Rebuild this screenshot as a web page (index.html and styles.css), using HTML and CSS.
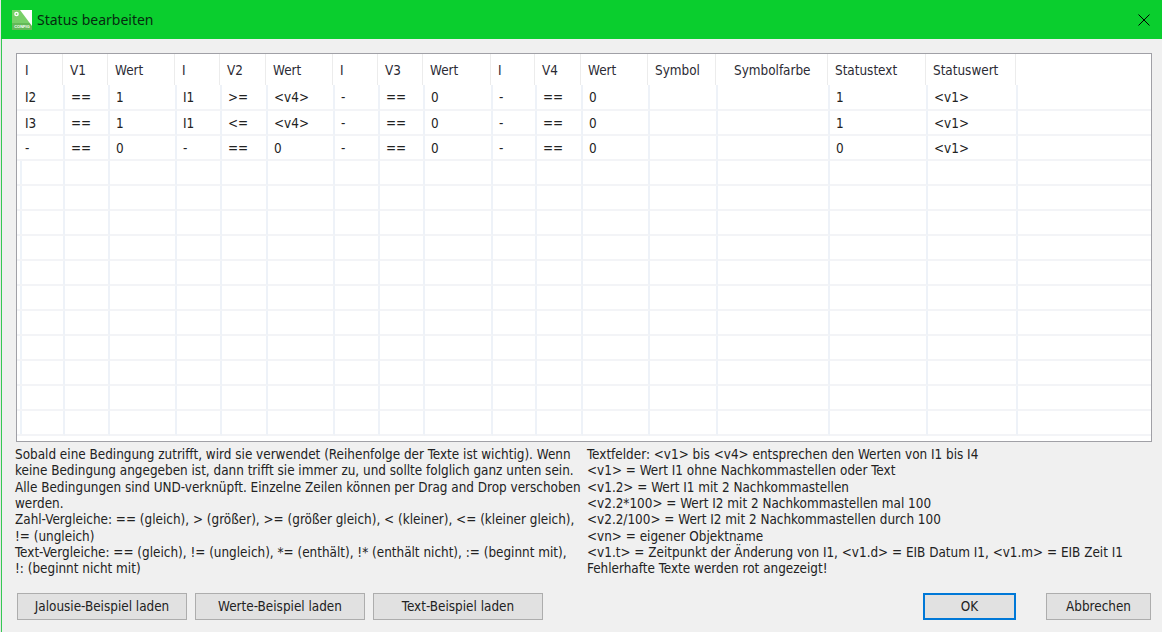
FILE: index.html
```html
<!DOCTYPE html>
<html lang="de">
<head>
<meta charset="utf-8">
<title>Status bearbeiten</title>
<link rel="stylesheet" href="styles.css">
</head>
<body>
<div class="window">
  <header class="titlebar">
    <svg class="logo" width="20" height="20" viewBox="0 0 20 20">
      <rect width="20" height="20" fill="#78cf68"/>
      <rect y="13" width="20" height="7" fill="#63b957"/>
      <path d="M8 0H20V16Z" fill="#ffffff"/>
      <circle cx="4.5" cy="4" r="1.6" fill="none" stroke="#fff" stroke-width="1.4"/>
      <text x="10" y="18.4" text-anchor="middle" class="logo-text">CONFIG</text>
    </svg>
    <span class="title">Status bearbeiten</span>
    <svg class="close" width="12" height="12" viewBox="0 0 12 12"><path d="M0.5 0.5L11.5 11.5M11.5 0.5L0.5 11.5" stroke="#000" stroke-width="1" fill="none"/></svg>
  </header>
  <main class="content">
    <div class="frame">
      <table class="grid">
        <colgroup>
          <col class="w48"><col class="w45"><col class="w67"><col class="w45"><col class="w46"><col class="w67"><col class="w45"><col class="w45"><col class="w68"><col class="w44"><col class="w46"><col class="w67"><col class="w68"><col class="w112"><col class="w98"><col class="w90"><col>
        </colgroup>
        <thead>
          <tr><th class="first">I</th><th>V1</th><th>Wert</th><th>I</th><th>V2</th><th>Wert</th><th>I</th><th>V3</th><th>Wert</th><th>I</th><th>V4</th><th>Wert</th><th>Symbol</th><th class="wide">Symbolfarbe</th><th>Statustext</th><th>Statuswert</th><th class="filler"></th></tr>
        </thead>
        <tbody>
          <tr><td class="first">I2</td><td>==</td><td>1</td><td>I1</td><td>&gt;=</td><td>&lt;v4&gt;</td><td>-</td><td>==</td><td>0</td><td>-</td><td>==</td><td>0</td><td></td><td></td><td>1</td><td>&lt;v1&gt;</td><td class="filler"></td></tr>
          <tr><td class="first">I3</td><td>==</td><td>1</td><td>I1</td><td>&lt;=</td><td>&lt;v4&gt;</td><td>-</td><td>==</td><td>0</td><td>-</td><td>==</td><td>0</td><td></td><td></td><td>1</td><td>&lt;v1&gt;</td><td class="filler"></td></tr>
          <tr><td class="first">-</td><td>==</td><td>0</td><td>-</td><td>==</td><td>0</td><td>-</td><td>==</td><td>0</td><td>-</td><td>==</td><td>0</td><td></td><td></td><td>0</td><td>&lt;v1&gt;</td><td class="filler"></td></tr>
          <tr class="empty"><td></td><td></td><td></td><td></td><td></td><td></td><td></td><td></td><td></td><td></td><td></td><td></td><td></td><td></td><td></td><td></td><td class="filler"></td></tr>
          <tr class="empty"><td></td><td></td><td></td><td></td><td></td><td></td><td></td><td></td><td></td><td></td><td></td><td></td><td></td><td></td><td></td><td></td><td class="filler"></td></tr>
          <tr class="empty"><td></td><td></td><td></td><td></td><td></td><td></td><td></td><td></td><td></td><td></td><td></td><td></td><td></td><td></td><td></td><td></td><td class="filler"></td></tr>
          <tr class="empty"><td></td><td></td><td></td><td></td><td></td><td></td><td></td><td></td><td></td><td></td><td></td><td></td><td></td><td></td><td></td><td></td><td class="filler"></td></tr>
          <tr class="empty"><td></td><td></td><td></td><td></td><td></td><td></td><td></td><td></td><td></td><td></td><td></td><td></td><td></td><td></td><td></td><td></td><td class="filler"></td></tr>
          <tr class="empty"><td></td><td></td><td></td><td></td><td></td><td></td><td></td><td></td><td></td><td></td><td></td><td></td><td></td><td></td><td></td><td></td><td class="filler"></td></tr>
          <tr class="empty"><td></td><td></td><td></td><td></td><td></td><td></td><td></td><td></td><td></td><td></td><td></td><td></td><td></td><td></td><td></td><td></td><td class="filler"></td></tr>
          <tr class="empty"><td></td><td></td><td></td><td></td><td></td><td></td><td></td><td></td><td></td><td></td><td></td><td></td><td></td><td></td><td></td><td></td><td class="filler"></td></tr>
          <tr class="empty"><td></td><td></td><td></td><td></td><td></td><td></td><td></td><td></td><td></td><td></td><td></td><td></td><td></td><td></td><td></td><td></td><td class="filler"></td></tr>
          <tr class="empty"><td></td><td></td><td></td><td></td><td></td><td></td><td></td><td></td><td></td><td></td><td></td><td></td><td></td><td></td><td></td><td></td><td class="filler"></td></tr>
          <tr class="empty"><td></td><td></td><td></td><td></td><td></td><td></td><td></td><td></td><td></td><td></td><td></td><td></td><td></td><td></td><td></td><td></td><td class="filler"></td></tr>
        </tbody>
      </table>
    </div>
    <section class="help">
      <p class="help-left">Sobald eine Bedingung zutrifft, wird sie verwendet (Reihenfolge der Texte ist wichtig). Wenn<br>keine Bedingung angegeben ist, dann trifft sie immer zu, und sollte folglich ganz unten sein.<br>Alle Bedingungen sind UND-verknüpft. Einzelne Zeilen können per Drag and Drop verschoben<br>werden.<br>Zahl-Vergleiche: == (gleich), &gt; (größer), &gt;= (größer gleich), &lt; (kleiner), &lt;= (kleiner gleich),<br>!= (ungleich)<br>Text-Vergleiche: == (gleich), != (ungleich), *= (enthält), !* (enthält nicht), := (beginnt mit),<br>!: (beginnt nicht mit)</p>
      <p class="help-right">Textfelder: &lt;v1&gt; bis &lt;v4&gt; entsprechen den Werten von I1 bis I4<br>&lt;v1&gt; = Wert I1 ohne Nachkommastellen oder Text<br>&lt;v1.2&gt; = Wert I1 mit 2 Nachkommastellen<br>&lt;v2.2*100&gt; = Wert I2 mit 2 Nachkommastellen mal 100<br>&lt;v2.2/100&gt; = Wert I2 mit 2 Nachkommastellen durch 100<br>&lt;vn&gt; = eigener Objektname<br>&lt;v1.t&gt; = Zeitpunkt der Änderung von I1, &lt;v1.d&gt; = EIB Datum I1, &lt;v1.m&gt; = EIB Zeit I1<br>Fehlerhafte Texte werden rot angezeigt!</p>
    </section>
    <footer class="buttons">
      <button class="btn btn-load">Jalousie-Beispiel laden</button>
      <button class="btn btn-load">Werte-Beispiel laden</button>
      <button class="btn btn-load">Text-Beispiel laden</button>
      <button class="btn btn-ok">OK</button>
      <button class="btn btn-cancel">Abbrechen</button>
    </footer>
  </main>
</div>
</body>
</html>
```

FILE: styles.css
```css
* { box-sizing: border-box; }
html, body { margin: 0; height: 100%; overflow: hidden; }
body {
  background: #e6e6e6;
  padding-left: 1px;
  font-family: "DejaVu Sans", "Liberation Sans", sans-serif;
  font-stretch: condensed;
  font-size: 13.4px;
  color: #222;
}
.window {
  height: 632px;
  display: flex;
  flex-direction: column;
  background: #f0f0f0;
  border-left: 1px solid #35c954;
}
.titlebar {
  height: 39px;
  flex: none;
  margin-left: -1px;
  background: #0ace2e;
  display: flex;
  align-items: center;
  padding-left: 11px;
  padding-right: 12px;
}
.logo { flex: none; }
.logo-text { font-size: 4px; font-weight: 700; fill: #fff; font-family: "Liberation Sans", sans-serif; }
.title { margin-left: 5px; font-family: "Noto Sans", sans-serif; font-stretch: normal; font-size: 14px; color: #062b10; flex: 1; }
.close { flex: none; }
.content { flex: 1; display: flex; flex-direction: column; padding: 14px 10px 0 14px; }
.frame {
  height: 389px;
  width: 1136px;
  border: 1px solid #a0a0a6;
  background: #fff;
  overflow: hidden;
  flex: none;
}
.grid { width: 1134px; table-layout: fixed; border-collapse: separate; border-spacing: 0; }
.w44 { width: 44px; } .w45 { width: 45px; } .w46 { width: 46px; } .w48 { width: 48px; }
.w67 { width: 67px; } .w68 { width: 68px; } .w90 { width: 90px; }
.w98 { width: 98px; } .w112 { width: 112px; }
th {
  height: 31px;
  padding: 2px 0 0 5px;
  text-align: left;
  font-weight: 400;
  color: #2a2a33;
  background: linear-gradient(#ececec, #ececec) right 2px top 0 / 1px 100% no-repeat;
  white-space: nowrap;
}
th.first { padding-left: 8px; }
th.wide { padding-left: 16px; }
th.filler { background: none; }
td.filler { border-right: 0; }
td {
  height: 25px;
  padding: 1px 0 0 6px;
  border-right: 2px solid #eef2f8;
  border-bottom: 2px solid #f3f4f7;
  white-space: nowrap;
}
tbody tr:first-child td { height: 26px; }
td.first { padding-left: 8px; }
.empty td:first-child { background: linear-gradient(#eef3f9, #eef3f9) 3px 0 / 2px 100% no-repeat; }
.help { display: flex; margin-top: 5px; flex: none; }
.help p { margin: 0; line-height: 16.35px; white-space: nowrap; color: #222; }
.help-left { width: 572px; margin-left: -1px !important; }
.buttons { display: flex; margin-top: 15px; padding-left: 1px; flex: none; }
.btn {
  height: 27px;
  padding: 0;
  font: inherit;
  color: #222;
  background: #e1e1e1;
  border: 1px solid #adadad;
}
.btn-load { width: 170px; margin-right: 8px; }
.btn-ok { width: 93px; margin-left: 372px; border: 2px solid #0078d7; }
.btn-cancel { width: 105px; margin-left: 30px; }
```
